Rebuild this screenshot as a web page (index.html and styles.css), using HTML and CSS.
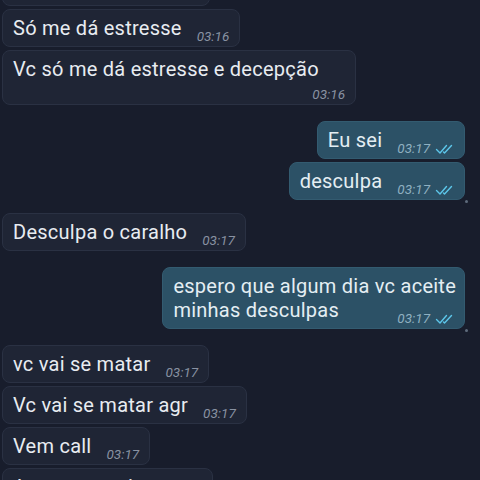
FILE: index.html
```html
<!DOCTYPE html>
<html lang="pt">
<head>
    <meta charset="UTF-8">
    <meta name="viewport" content="width=device-width, initial-scale=1.0">
    <title>Conversa</title>
    <link rel="stylesheet" href="styles.css">
</head>
<body>
    <div class="chat">
        <div class="msg in">
            Para de ignorar<span class="meta">03:16</span>
        </div>
        <div class="msg in">
            Só me dá estresse<span class="meta">03:16</span>
        </div>
        <div class="msg in">
            Vc só me dá estresse e decepção<span class="meta wrapped">03:16</span>
        </div>

        <div class="msg out group-lg">
            Eu sei<span class="meta">03:17 <svg class="ticks" viewBox="0 0 20 10"><path d="M1 5.5l3.5 3.5L11 1.5M8 8l1 1 7-7.5"/></svg></span>
        </div>
        <div class="msg out tail">
            desculpa<span class="meta">03:17 <svg class="ticks" viewBox="0 0 20 10"><path d="M1 5.5l3.5 3.5L11 1.5M8 8l1 1 7-7.5"/></svg></span>
        </div>

        <div class="msg in group">
            Desculpa o caralho<span class="meta">03:17</span>
        </div>

        <div class="msg out group-lg tail">
            espero que algum dia vc aceite<br>minhas desculpas<span class="meta">03:17 <svg class="ticks" viewBox="0 0 20 10"><path d="M1 5.5l3.5 3.5L11 1.5M8 8l1 1 7-7.5"/></svg></span>
        </div>

        <div class="msg in group-lg">
            vc vai se matar<span class="meta">03:17</span>
        </div>
        <div class="msg in">
            Vc vai se matar agr<span class="meta">03:17</span>
        </div>
        <div class="msg in">
            Vem call<span class="meta">03:17</span>
        </div>
        <div class="msg in">
            A gente precisa<span class="meta">03:17</span>
        </div>
    </div>
</body>
</html>
```

FILE: styles.css
```css
body {
    margin: 0;
    height: 480px;
    overflow: hidden;
    background-color: #181d2c;
    font-family: Roboto, "Noto Sans", sans-serif;
}
.chat {
    display: flex;
    flex-direction: column;
    gap: 3px;
    margin-top: -32px;
}
.msg {
    position: relative;
    width: fit-content;
    padding: 6px 10px 6px 10px;
    border-radius: 8px;
    font-size: 20px;
    line-height: 24px;
    letter-spacing: 0.25px;
    box-sizing: border-box;
}
.msg.in {
    align-self: flex-start;
    margin-left: 2px;
    max-width: 354px;
    background-color: #1f2535;
    border: 1px solid #2a3143;
    color: #e8ecf1;
}
.msg.out {
    align-self: flex-end;
    margin-right: 15px;
    max-width: 330px;
    background-color: #2c5166;
    border: 1px solid #335b70;
    color: #e4eef3;
    padding-left: 10px;
    padding-right: 8px;
}
.msg.group {
    margin-top: 10px;
}
.msg.group-lg {
    margin-top: 13px;
}
.msg.tail::after {
    content: "";
    position: absolute;
    right: -4px;
    bottom: -4px;
    width: 3px;
    height: 3px;
    border-radius: 50%;
    background-color: #5e6b7c;
}
.meta {
    float: right;
    display: flex;
    align-items: center;
    gap: 5px;
    margin: 13px 0 -4px 15px;
    font-size: 13.5px;
    line-height: 15px;
    letter-spacing: 0;
    font-style: italic;
    color: #8992a2;
}
/* time pushed onto its own line when the text fills the bubble */
.meta.wrapped {
    margin-top: 6px;
}
.out .meta {
    color: #8fb0c1;
}
.ticks {
    width: 21px;
    height: 10px;
    fill: none;
    stroke: #5cc6ea;
    stroke-width: 1.4;
    stroke-linecap: round;
    stroke-linejoin: round;
}
```
